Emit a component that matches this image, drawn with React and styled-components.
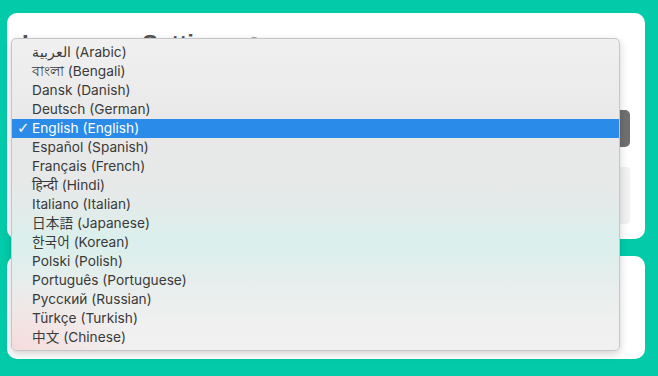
import React from "react";
import styled, { createGlobalStyle } from "styled-components";

const Global = createGlobalStyle`
  html, body { margin: 0; padding: 0; }
  body {
    background: #03cbaa;
    font-family: "Liberation Sans", Arial, sans-serif;
    width: 658px;
    height: 376px;
    overflow: hidden;
  }
`;

const Page = styled.div`
  position: relative;
  display: flex;
  flex-direction: column;
  gap: 17px;
  padding: 13px 13px 0 7px;
  height: 376px;
  box-sizing: border-box;
`;

const Card = styled.section`
  background: #ffffff;
  border-radius: 10px;
  height: ${(p) => p.$h}px;
  box-sizing: border-box;
  padding: 17px 15px 0 15px;
  display: flex;
  flex-direction: column;
`;

const TitleRow = styled.div`
  display: flex;
  align-items: center;
  gap: 10px;
`;

const Title = styled.h2`
  margin: 0;
  font-size: 24px;
  line-height: 28px;
  font-weight: 700;
  color: #555555;
`;

const HelpIcon = styled.span`
  width: 12px;
  height: 12px;
  border: 1.5px solid #9a9a9a;
  border-radius: 50%;
  color: #9a9a9a;
  font-size: 9px;
  display: inline-flex;
  align-items: center;
  justify-content: center;
`;

const FieldRow = styled.div`
  display: flex;
  justify-content: space-between;
  align-items: center;
  margin-top: 52px;
`;

const Label = styled.span`
  font-size: 15px;
  color: #444;
`;

const SelectBox = styled.div`
  width: 200px;
  height: 37px;
  border-radius: 5px;
  background: #6f6f6f;
`;

const TextBox = styled.div`
  margin-top: 20px;
  height: 57px;
  border-radius: 4px;
  background: #f1f1f1;
`;

const Menu = styled.ul`
  position: absolute;
  left: 11px;
  top: 38px;
  width: 609px;
  height: 313px;
  box-sizing: border-box;
  margin: 0;
  padding: 4px 0 4px 0;
  list-style: none;
  border: 1px solid #c6c6c6;
  border-radius: 5px;
  box-shadow: 0 3px 8px rgba(0, 0, 0, 0.18);
  background:
    radial-gradient(ellipse 120px 70px at 0% 100%, rgba(246, 216, 216, 0.85), rgba(246, 216, 216, 0) 100%),
    linear-gradient(
      180deg,
      #f0f0f0 0%,
      #e8e8e8 30%,
      #e7e9e9 48%,
      #dbefec 64%,
      #dcefec 68%,
      #e8eeed 80%,
      #f0f0f0 92%,
      #f1f1f1 100%
    );
  font-family: Inter, "Noto Sans", "Noto Sans CJK JP", sans-serif;
`;

const Item = styled.li`
  position: relative;
  height: 19px;
  line-height: 19px;
  padding-left: 20px;
  font-size: 13.7px;
  color: ${(p) => (p.$active ? "#ffffff" : "#3a3a3a")};
  background: ${(p) => (p.$active ? "#2a8be9" : "transparent")};
  white-space: nowrap;
`;

const Check = styled.span`
  position: absolute;
  left: 5px;
  top: 0;
  font-size: 15px;
  font-family: "DejaVu Sans", sans-serif;
`;

const languages = [
  "العربية (Arabic)",
  "বাংলা (Bengali)",
  "Dansk (Danish)",
  "Deutsch (German)",
  "English (English)",
  "Español (Spanish)",
  "Français (French)",
  "हिन्दी (Hindi)",
  "Italiano (Italian)",
  "日本語 (Japanese)",
  "한국어 (Korean)",
  "Polski (Polish)",
  "Português (Portuguese)",
  "Русский (Russian)",
  "Türkçe (Turkish)",
  "中文 (Chinese)",
];

export default function App() {
  return (
    <>
      <Global />
      <Page>
        <Card $h={226}>
          <TitleRow>
            <Title>Language Settings</Title>
            <HelpIcon>?</HelpIcon>
          </TitleRow>
          <FieldRow>
            <Label>Language</Label>
            <SelectBox />
          </FieldRow>
          <TextBox />
        </Card>
        <Card $h={103} />
        <Menu>
          {languages.map((l) => (
            <Item key={l} $active={l.startsWith("English")}>
              {l.startsWith("English") && <Check>✓</Check>}
              <span dir="ltr">{l}</span>
            </Item>
          ))}
        </Menu>
      </Page>
    </>
  );
}
